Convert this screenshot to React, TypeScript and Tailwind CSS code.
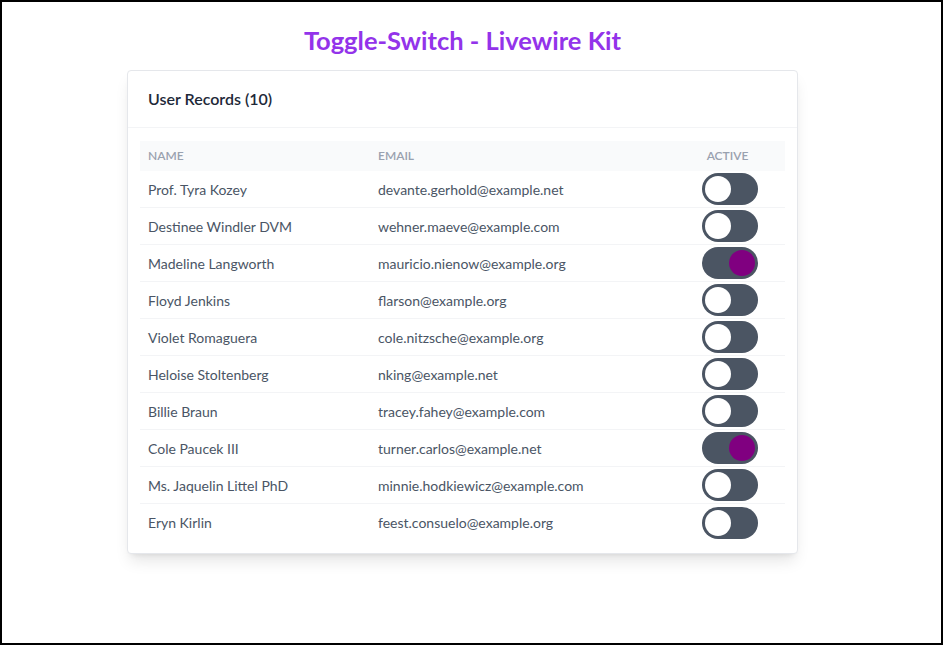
import React, { useState } from 'react';

type User = { name: string; email: string; active: boolean };

const initialUsers: User[] = [
  { name: 'Prof. Tyra Kozey', email: 'devante.gerhold@example.net', active: false },
  { name: 'Destinee Windler DVM', email: 'wehner.maeve@example.com', active: false },
  { name: 'Madeline Langworth', email: 'mauricio.nienow@example.org', active: true },
  { name: 'Floyd Jenkins', email: 'flarson@example.org', active: false },
  { name: 'Violet Romaguera', email: 'cole.nitzsche@example.org', active: false },
  { name: 'Heloise Stoltenberg', email: 'nking@example.net', active: false },
  { name: 'Billie Braun', email: 'tracey.fahey@example.com', active: false },
  { name: 'Cole Paucek III', email: 'turner.carlos@example.net', active: true },
  { name: 'Ms. Jaquelin Littel PhD', email: 'minnie.hodkiewicz@example.com', active: false },
  { name: 'Eryn Kirlin', email: 'feest.consuelo@example.org', active: false },
];

const Toggle: React.FC<{ on: boolean; onClick: () => void }> = ({ on, onClick }) => (
  <button
    onClick={onClick}
    className={`flex h-8 w-14 items-center rounded-full bg-[#4b5563] px-[3px] ${on ? 'justify-end' : 'justify-start'}`}
  >
    <span className={`block h-[26px] w-[26px] rounded-full ${on ? 'bg-[#800080]' : 'bg-white'}`} />
  </button>
);

const App: React.FC = () => {
  const [users, setUsers] = useState(initialUsers);

  const toggle = (i: number) => {
    setUsers(users.map((u, idx) => (idx === i ? { ...u, active: !u.active } : u)));
  };

  return (
    <div
      className="h-[645px] w-[943px] border-2 border-black bg-white pr-[18px]"
      style={{ fontFamily: 'Lato, "Noto Sans", sans-serif' }}
    >
      <h1 className="pt-[22px] text-center text-[25.5px] font-bold leading-8 text-[#9333ea]">
        Toggle-Switch - Livewire Kit
      </h1>

      <div className="mx-auto mt-[14px] w-[671px] rounded-sm border border-gray-200 bg-white shadow-lg">
        <div className="border-b border-gray-100 px-5 py-4">
          <h2 className="text-[16px] font-semibold leading-6 text-gray-800">User Records (10)</h2>
        </div>

        <div className="px-3 pb-3 pt-[13px]">
          <div className="grid h-[30px] grid-cols-[230px_300px_1fr] items-center bg-gray-50 text-[12px] font-semibold uppercase text-gray-400">
            <div className="pl-2">Name</div>
            <div className="pl-2">Email</div>
            <div className="text-center">Active</div>
          </div>

          {users.map((u, i) => (
            <div
              key={u.email}
              className={`grid h-[37px] grid-cols-[230px_300px_1fr] items-center text-[14px] text-gray-600 ${i < users.length - 1 ? 'border-b border-gray-100' : ''}`}
            >
              <div className="pl-2">{u.name}</div>
              <div className="pl-2">{u.email}</div>
              <div className="flex justify-center pl-[4px]">
                <Toggle on={u.active} onClick={() => toggle(i)} />
              </div>
            </div>
          ))}
        </div>
      </div>
    </div>
  );
};

export default App;
